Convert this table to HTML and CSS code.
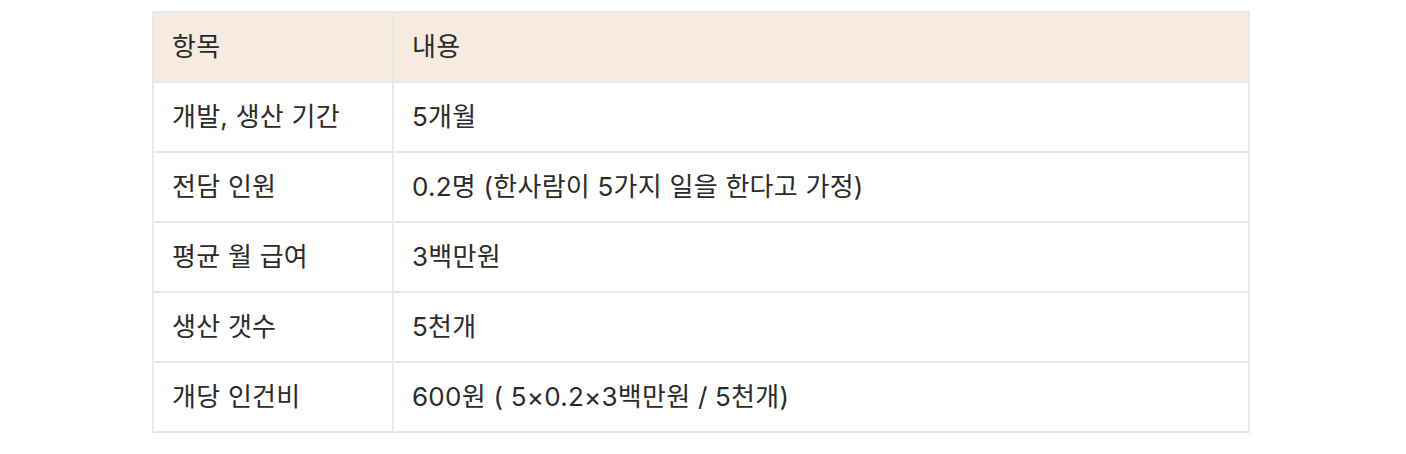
FILE: index.html
```html
<!DOCTYPE html>
<html lang="ko">
<head>
<meta charset="utf-8">
<link rel="stylesheet" href="styles.css">
</head>
<body>
<div class="page">
  <table class="cost-table">
    <thead>
      <tr><th class="col-item">항목</th><th>내용</th></tr>
    </thead>
    <tbody>
      <tr><td>개발, 생산 기간</td><td>5개월</td></tr>
      <tr><td>전담 인원</td><td>0.2명 (한사람이 5가지 일을 한다고 가정)</td></tr>
      <tr><td>평균 월 급여</td><td>3백만원</td></tr>
      <tr><td>생산 갯수</td><td>5천개</td></tr>
      <tr><td>개당 인건비</td><td>600원 ( 5×0.2×3백만원 / 5천개)</td></tr>
    </tbody>
  </table>
</div>
</body>
</html>
```
FILE: styles.css
```css
html, body {
  margin: 0;
  padding: 0;
  background: #ffffff;
}
.page {
  padding: 11px 0 0 152px;
}
.cost-table {
  width: 1098px;
  border-collapse: collapse;
  font-family: Inter, "Noto Sans CJK KR", sans-serif;
  font-size: 26px;
  letter-spacing: 0.25px;
  color: #2b2b2b;
}
.cost-table th,
.cost-table td {
  border: 2px solid #e8e8e8;
  height: 70px;
  padding: 0 18px;
  box-sizing: border-box;
  text-align: left;
  vertical-align: middle;
  font-weight: 400;
  line-height: 34px;
}
.cost-table thead th {
  background: #f7ebdf;
}
.col-item {
  width: 240px;
}
```
